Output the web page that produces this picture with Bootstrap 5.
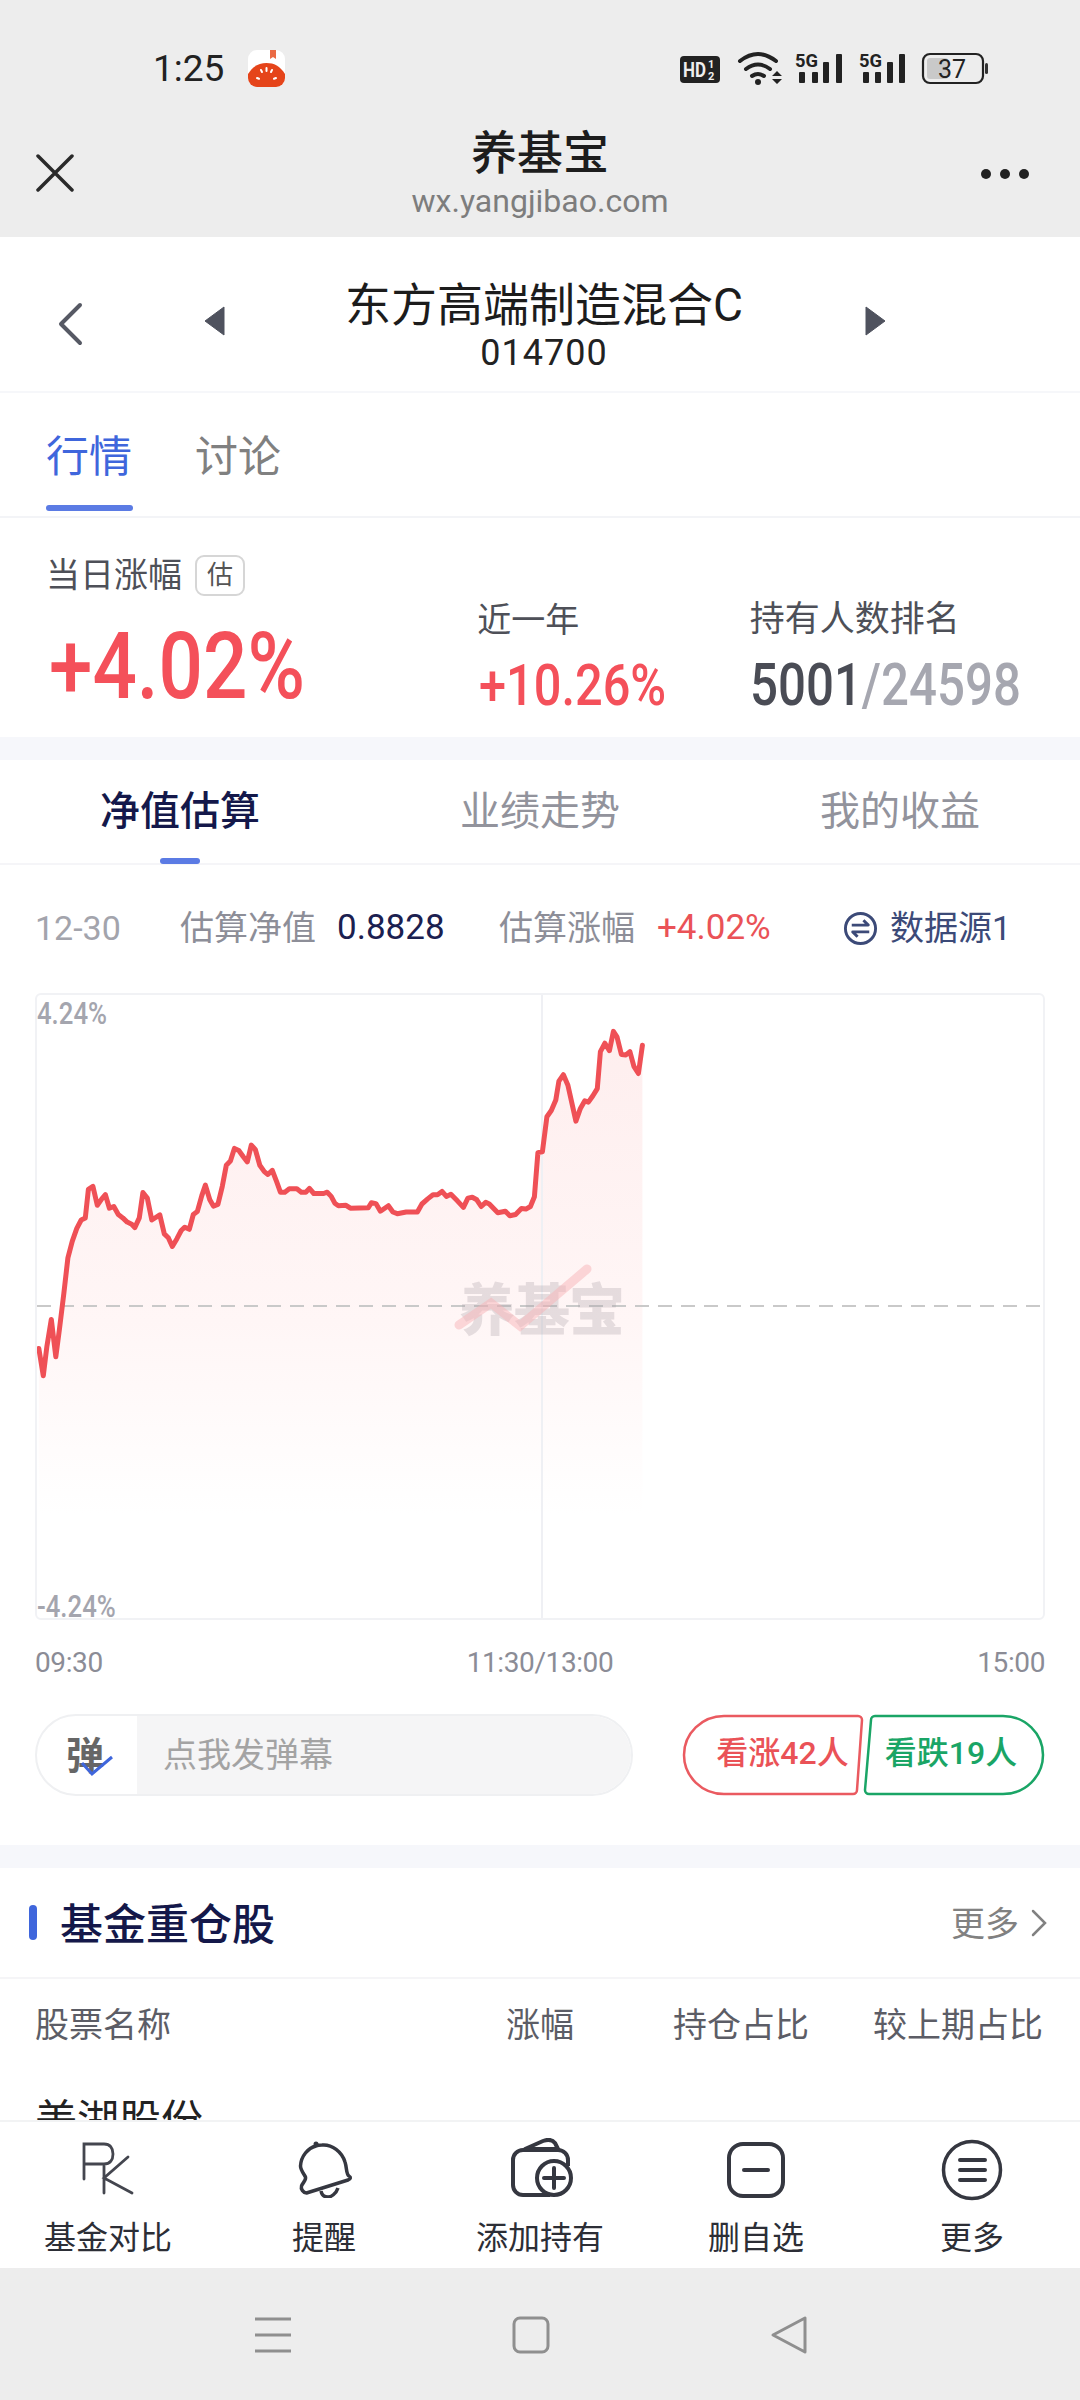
<!DOCTYPE html>
<html lang="zh">
<head>
    <meta charset="UTF-8">
    <meta name="viewport" content="width=device-width, initial-scale=1.0">
    <title>养基宝</title>
    <link href="https://cdn.jsdelivr.net/npm/bootstrap@5.3.3/dist/css/bootstrap.min.css" rel="stylesheet">
    <style>
        :root { --cn: "Noto Sans CJK SC", sans-serif; }
        html, body { margin: 0; background: #fff; }
        body { width: 1080px; height: 2400px; overflow: hidden; font-family: Roboto, "Noto Sans CJK SC", sans-serif; display: flex; flex-direction: column; }
        .top-gray { background: #ededed; height: 237px; flex: none; }
        .status-row { height: 125px; padding: 50px 0 0 153px; }
        .status-time { font-size: 37px; color: #222; line-height: 37px; width: 95px; }
        .status-icons { margin-left: 395px; }
        .browser-row { height: 112px; position: relative; }
        .browser-side { width: 130px; flex: none; margin-bottom: 16px; }
        .side-left { padding-left: 36px; }
        .side-right { padding-right: 50px; }
        .browser-mid { flex: 1; text-align: center; margin-top: -16px; }
        .browser-title { font-size: 46px; font-weight: 500; line-height: 56px; color: #1d1d1d; }
        .browser-url { font-size: 32px; line-height: 41px; color: #7d7d7d; }
        .fund-head { height: 156px; flex: none; border-bottom: 2px solid #f6f7fa; position: relative; padding-left: 8px; }
        .fund-name { font-size: 46px; line-height: 56px; color: #1c1c1c; padding-top: 40px; }
        .fund-code { font-size: 36px; line-height: 41px; color: #222; letter-spacing: 1px; }
        .fund-back { position: absolute; left: 56px; top: 65px; }
        .fund-prev { position: absolute; left: 204px; top: 69px; }
        .fund-next { position: absolute; left: 864px; top: 69px; }
        .main-tabs { height: 125px; flex: none; border-bottom: 2px solid #f3f4f7; padding: 39px 0 0 46px; gap: 63px; }
        .main-tab { font-size: 43px; line-height: 50px; color: #808080; position: relative; height: 79px; }
        .main-tab.on { color: #3f66dc; }
        .main-tab.on::after { content: ""; position: absolute; left: 0; right: -1px; bottom: 0; height: 6px; border-radius: 3px; background: #5b7be4; }
        .stat-block { height: 219px; flex: none; }
        .stat-a { width: 432px; padding: 35px 0 0 46px; }
        .stat-b { width: 319px; padding: 80px 0 0 46px; }
        .stat-c { padding: 80px 0 0 0; }
        .stat-label { font-size: 34px; line-height: 44px; color: #4e5058; }
        .stat-c .stat-label { font-size: 35px; }
        .est-tag { display: inline-block; font-size: 26px; line-height: 36px; width: 50px; height: 41px; text-align: center; border: 2px solid #d6d6d6; border-radius: 9px; color: #555; margin-left: 13px; vertical-align: 3px; }
        .big-up, .mid-up, .mid-rank { font-weight: 500; transform-origin: left center; white-space: nowrap; }
        .big-up { font-size: 92px; line-height: 86px; color: #f4505a; margin: 27px 0 0 3px; transform: scaleX(.85); }
        .mid-up { font-size: 58px; line-height: 60px; color: #f4505a; margin: 13px 0 0 2px; transform: scaleX(.84); }
        .mid-rank { font-size: 60px; line-height: 60px; color: #4a4c55; margin-top: 13px; transform: scaleX(.82); }
        .mid-rank span { color: #a6a7b0; }
        .band { height: 23px; background: #f6f7fb; flex: none; }
        .sub-tabs { height: 105px; flex: none; border-bottom: 2px solid #f5f5f8; }
        .sub-tab { font-size: 40px; line-height: 50px; color: #92939c; position: relative; padding-top: 27px; height: 103px; text-align: center; }
        .sub-tab.on { color: #14184a; font-weight: 500; }
        .sub-tab.on::after { content: ""; position: absolute; left: 50%; margin-left: -20px; bottom: -1px; width: 40px; height: 6px; border-radius: 3px; background: #5b7be4; }
        .est-row { height: 126px; flex: none; padding: 0 35px; font-size: 34px; color: #8d8e98; margin-bottom: 2px; }
        .est-date { width: 145px; color: #a3a4ac; }
        .est-val { color: #1b2050; font-size: 35px; margin-left: 21px; width: 162px; }
        .est-pct { color: #ea5257; font-size: 35px; margin-left: 22px; width: 186px; }
        .src-txt { color: #3c4a78; }
        .src-ico { margin-right: 12px; }
        .chart-wrap { margin: 0 35px; height: 627px; flex: none; position: relative; border: 2px solid #f1f2f5; border-radius: 6px; overflow: hidden; }
        .chart-wrap svg { display: block; }
        .axis-top, .axis-bot { position: absolute; left: 0; font-size: 31px; line-height: 30px; font-weight: 500; color: #a4a5ae; transform: scaleX(.83); transform-origin: left center; }
        .axis-top { top: 4px; }
        .axis-bot { bottom: -1px; line-height: 24px; }
        .watermark { font-family: var(--cn); font-weight: 900; font-size: 56px; fill: #a8a0a4; fill-opacity: .3; }
        .time-axis { height: 92px; flex: none; padding: 0 35px 6px; font-size: 28px; color: #8b8c96; letter-spacing: -.4px; }
        .danmu-row { height: 133px; flex: none; padding: 2px 35px 0; }
        .danmu-box { width: 598px; height: 82px; border: 2px solid #eff0f2; border-radius: 41px; overflow: hidden; }
        .danmu-ico { width: 100px; flex: none; position: relative; font-size: 38px; font-weight: 700; color: #666; font-family: var(--cn); padding-left: 29px; line-height: 74px; }
        .danmu-ico svg { position: absolute; left: 43px; top: 38px; }
        .danmu-in { flex: 1; background: #f5f5f6; color: #a3a3a3; font-size: 34px; padding-left: 26px; line-height: 78px; }
        .vote-wrap { margin-left: 49px; width: 363px; height: 82px; }
        .vote-wrap svg { position: absolute; left: 0; top: 0; }
        .vote-up, .vote-down { position: relative; font-size: 32px; font-weight: 500; line-height: 78px; height: 82px; text-align: center; }
        .vote-up { color: #ea5257; width: 181px; padding-left: 20px; }
        .vote-down { color: #1aa566; width: 182px; padding-right: 6px; }
        .sec-head { height: 111px; flex: none; border-bottom: 2px solid #f5f5f7; padding: 0 33px 0 29px; }
        .sec-bar { width: 8px; height: 35px; border-radius: 4px; background: #3f66dc; margin-right: 23px; }
        .sec-title { font-size: 43px; font-weight: 500; color: #14184a; padding-top: 5px; }
        .sec-more { font-size: 34px; color: #818181; margin-left: auto; margin-right: 12px; padding-top: 3px; }
        .stock-table { flex: 1; overflow: hidden; padding: 0 35px; min-height: 0; }
        .stock-head { height: 88px; font-size: 34px; color: #5c5d66; padding-top: 4px; }
        .stock-c1 { width: 471px; }
        .stock-c2 { width: 167px; }
        .stock-c3 { width: 200px; }
        .stock-name { font-size: 42px; color: #222; line-height: 44px; padding-top: 32px; }
        .action-bar { height: 148px; flex: none; border-top: 2px solid #f2f3f4; background: #fff; }
        .action-item { width: 216px; text-align: center; padding-top: 16px; }
        .action-ico { height: 78px; }
        .action-txt { font-size: 32px; line-height: 44px; color: #2c2e36; }
        .sys-nav { height: 132px; flex: none; background: #ededed; }
    </style>
</head>
<body>
    <div class="top-gray">
        <div class="status-row d-flex">
            <div class="status-time">1:25</div>
            <svg width="37" height="37" viewBox="0 0 37 37">
                <defs><clipPath id="appClip"><rect width="37" height="37" rx="9"/></clipPath></defs>
                <g clip-path="url(#appClip)">
                    <rect width="37" height="37" fill="#fff"/>
                    <path d="M22 0h6v9l-3-2-3 2z" fill="#ea6a44"/>
                    <path d="M0 37V24C5 16 11 13 18.500 13S32 16 37 24v13z" fill="#e5441a"/>
                </g>
                <g stroke="#fff" stroke-width="2" stroke-linecap="round"><path d="M9 28l2 .8M28 28l-2 .8M13 20l1 2M24 20l-1 2M18.500 18v3"/></g>
            </svg>
            <svg class="status-icons" width="310" height="36" viewBox="0 0 310 36">
                <rect x="0" y="6" width="40" height="27" rx="4" fill="#222"/>
                <text x="3" y="27" font-size="20" font-weight="700" fill="#eee" font-family="Roboto, sans-serif" textLength="23" lengthAdjust="spacingAndGlyphs">HD</text>
                <text x="28" y="18" font-size="11" font-weight="700" fill="#eee" font-family="Roboto, sans-serif">1</text>
                <text x="28" y="30" font-size="11" font-weight="700" fill="#eee" font-family="Roboto, sans-serif">2</text>
                <g fill="none" stroke="#222" stroke-width="4" stroke-linecap="round">
                    <path d="M60 11q18-14 36 0"/>
                    <path d="M66 19q12-9 24 0"/>
                    <path d="M72 26q6-4 12 0"/>
                </g>
                <circle cx="78" cy="32" r="3" fill="#222"/>
                <path d="M92 26h10l-5-5zM92 29h10l-5 5z" fill="#222"/>
                <text x="115" y="17" font-size="18" font-weight="700" fill="#222" font-family="Roboto, sans-serif" textLength="23" lengthAdjust="spacingAndGlyphs">5G</text>
                <g fill="#222"><rect x="119" y="22" width="6" height="11" rx="1"/><rect x="132" y="22" width="6" height="11" rx="1"/><rect x="143" y="12" width="6" height="21" rx="1"/><rect x="156" y="4" width="6" height="29" rx="1"/></g>
                <text x="179" y="17" font-size="18" font-weight="700" fill="#222" font-family="Roboto, sans-serif" textLength="23" lengthAdjust="spacingAndGlyphs">5G</text>
                <g fill="#222"><rect x="183" y="22" width="6" height="11" rx="1"/><rect x="195" y="22" width="6" height="11" rx="1"/><rect x="207" y="12" width="6" height="21" rx="1"/><rect x="219" y="4" width="6" height="29" rx="1"/></g>
                <rect x="243" y="4" width="60" height="29" rx="7" fill="none" stroke="#222" stroke-width="2.200"/>
                <rect x="247" y="8" width="21" height="21" rx="3" fill="#c9c9c9"/>
                <rect x="305" y="13" width="3" height="11" rx="1.500" fill="#333"/>
                <text x="258" y="28" font-size="25" fill="#222" font-family="Roboto, sans-serif">37</text>
            </svg>
        </div>
        <div class="browser-row d-flex align-items-center">
            <div class="browser-side side-left">
                <svg class="d-block" width="38" height="38" viewBox="0 0 38 38"><path d="M2 2 36 36M36 2 2 36" stroke="#2a2a2a" stroke-width="3.500" stroke-linecap="round"/></svg>
            </div>
            <div class="browser-mid">
                <div class="browser-title">养基宝</div>
                <div class="browser-url">wx.yangjibao.com</div>
            </div>
            <div class="browser-side side-right text-end">
                <svg width="50" height="12" viewBox="0 0 50 12"><circle cx="6" cy="6" r="5" fill="#222"/><circle cx="25" cy="6" r="5" fill="#222"/><circle cx="44" cy="6" r="5" fill="#222"/></svg>
            </div>
        </div>
    </div>

    <div class="fund-head text-center">
        <svg class="fund-back" width="28" height="44" viewBox="0 0 28 44"><path d="M24 3 5 22l19 19" fill="none" stroke="#565964" stroke-width="4" stroke-linecap="round" stroke-linejoin="round"/></svg>
        <svg class="fund-prev" width="22" height="30" viewBox="0 0 22 30"><path d="M20 1v28L1 15z" fill="#4f525e" stroke="#4f525e" stroke-linejoin="round"/></svg>
        <div class="fund-name">东方高端制造混合C</div>
        <div class="fund-code">014700</div>
        <svg class="fund-next" width="22" height="30" viewBox="0 0 22 30"><path d="M2 1v28l19-14z" fill="#4f525e" stroke="#4f525e" stroke-linejoin="round"/></svg>
    </div>

    <div class="main-tabs d-flex">
        <div class="main-tab on">行情</div>
        <div class="main-tab">讨论</div>
    </div>

    <div class="stat-block d-flex">
        <div class="stat-a">
            <div class="stat-label">当日涨幅<span class="est-tag">估</span></div>
            <div class="big-up">+4.02%</div>
        </div>
        <div class="stat-b">
            <div class="stat-label">近一年</div>
            <div class="mid-up">+10.26%</div>
        </div>
        <div class="stat-c">
            <div class="stat-label">持有人数排名</div>
            <div class="mid-rank">5001<span>/24598</span></div>
        </div>
    </div>
    <div class="band"></div>

    <div class="sub-tabs row g-0">
        <div class="col-4 sub-tab on">净值估算</div>
        <div class="col-4 sub-tab">业绩走势</div>
        <div class="col-4 sub-tab">我的收益</div>
    </div>

    <div class="est-row d-flex align-items-center">
        <span class="est-date">12-30</span>
        <span>估算净值</span><span class="est-val">0.8828</span>
        <span>估算涨幅</span><span class="est-pct">+4.02%</span>
        <span class="d-flex align-items-center">
            <svg class="src-ico" width="35" height="35" viewBox="0 0 36 36"><circle cx="18" cy="18" r="15.500" fill="none" stroke="#3c4a78" stroke-width="3"/><path d="M9 14.500h17l-5-5M27 21.500H10l5 5" fill="none" stroke="#3c4a78" stroke-width="3" stroke-linejoin="round"/></svg>
            <span class="src-txt">数据源1</span>
        </span>
    </div>

    <div class="chart-wrap">
        <svg id="chart" width="1006" height="623" viewBox="0 0 1006 623">
            <defs>
                <linearGradient id="areaFill" x1="0" y1="0" x2="0" y2="1">
                    <stop offset="0" stop-color="#feeeee"/>
                    <stop offset=".6" stop-color="#fff6f6"/>
                    <stop offset="1" stop-color="#ffffff"/>
                </linearGradient>
            </defs>
            <path id="area" fill="url(#areaFill)"/>
            <line x1="505" y1="0" x2="505" y2="623" stroke="#eff0f4" stroke-width="2"/>
            <line x1="0" y1="311" x2="1006" y2="311" stroke="#c9c9c9" stroke-width="2" stroke-dasharray="14 9"/>
            <text class="watermark" x="505" y="335" text-anchor="middle" textLength="166">养基宝</text>
            <path d="M422 330 454 308 483 331 550 274" fill="none" stroke="#f7b4b8" stroke-opacity=".5" stroke-width="9" stroke-linecap="round"/>
            <polyline id="line" fill="none" stroke="#ef5056" stroke-width="5" stroke-linejoin="round" stroke-linecap="round"/>
        </svg>
        <div class="axis-top">4.24%</div>
        <div class="axis-bot">-4.24%</div>
    </div>

    <div class="time-axis d-flex justify-content-between align-items-center">
        <span>09:30</span><span>11:30/13:00</span><span>15:00</span>
    </div>

    <div class="danmu-row d-flex">
        <div class="danmu-box d-flex">
            <div class="danmu-ico">弹<svg width="34" height="24" viewBox="0 0 34 24"><path d="M2 9l10 11L32 3" fill="none" stroke="#3f66dc" stroke-width="3"/></svg></div>
            <div class="danmu-in">点我发弹幕</div>
        </div>
        <div class="vote-wrap d-flex position-relative">
            <svg width="363" height="82" viewBox="0 0 363 82">
                <path d="M42 2H176a4 4 0 0 1 4 4l-5 70a4 4 0 0 1-4 4H42a40 39 0 0 1 0-78z" fill="none" stroke="#ea5a60" stroke-width="2.500"/>
                <path d="M193 2h128a40 39 0 0 1 0 78H187a4 4 0 0 1-4-4l6-70a4 4 0 0 1 4-4z" fill="none" stroke="#1aa566" stroke-width="2.500"/>
            </svg>
            <div class="vote-up">看涨42人</div>
            <div class="vote-down">看跌19人</div>
        </div>
    </div>

    <div class="band"></div>

    <div class="sec-head d-flex align-items-center">
        <div class="sec-bar"></div>
        <div class="sec-title">基金重仓股</div>
        <div class="sec-more">更多</div>
        <svg width="16" height="28" viewBox="0 0 16 28"><path d="M2 2l12 12L2 26" fill="none" stroke="#818181" stroke-width="2.500" stroke-linecap="round"/></svg>
    </div>

    <div class="stock-table">
        <div class="stock-head d-flex align-items-center">
            <span class="stock-c1">股票名称</span><span class="stock-c2">涨幅</span><span class="stock-c3">持仓占比</span><span>较上期占比</span>
        </div>
        <div class="stock-name">美湖股份</div>
    </div>

    <div class="action-bar d-flex">
        <div class="action-item">
            <div class="action-ico"><svg width="64" height="60" viewBox="0 0 64 60"><path d="M8 41V6h20c6 0 9 4 9 10s-3 10-9 10H8M28 28v27M52 19 28 40l28 15" fill="none" stroke="#44464f" stroke-width="2.800" stroke-linecap="round"/></svg></div>
            <div class="action-txt">基金对比</div>
        </div>
        <div class="action-item">
            <div class="action-ico"><svg width="60" height="60" viewBox="0 0 60 60"><path d="M22 8C14 10 7 18 6.500 28c0 4 4 9 5 11 1 3-3 6-4 9-1 3 2 7 5 7L54 42c3-1 3-3 1-4-3-2-2-8-4-14C48 14 38 6 28 7c-2 0-4 0-6 1z" fill="none" stroke="#353740" stroke-width="3.500" stroke-linejoin="round"/><path d="M27 53c1 5 4 6 7 6s8-3 10-9" fill="none" stroke="#353740" stroke-width="3.500"/><circle cx="22" cy="6" r="2.500" fill="#353740"/></svg></div>
            <div class="action-txt">提醒</div>
        </div>
        <div class="action-item">
            <div class="action-ico"><svg width="70" height="60" viewBox="0 0 70 60"><path d="M45 57H18A10 10 0 0 1 8 47V22a10 10 0 0 1 10-10h35a10 10 0 0 1 10 10v6" fill="none" stroke="#353740" stroke-width="4"/><path d="M20 11 38 3q8-3 12 2l3 6z" fill="none" stroke="#353740" stroke-width="4" stroke-linejoin="round"/><circle cx="49" cy="40" r="17" fill="#fff" stroke="#353740" stroke-width="4"/><path d="M49 30v20M39 40h20" stroke="#353740" stroke-width="4" stroke-linecap="round"/></svg></div>
            <div class="action-txt">添加持有</div>
        </div>
        <div class="action-item">
            <div class="action-ico"><svg width="60" height="62" viewBox="0 0 60 62"><rect x="3" y="6" width="54" height="52" rx="14" fill="none" stroke="#353740" stroke-width="4"/><path d="M18 32h24" stroke="#353740" stroke-width="4" stroke-linecap="round"/></svg></div>
            <div class="action-txt">删自选</div>
        </div>
        <div class="action-item">
            <div class="action-ico"><svg width="64" height="64" viewBox="0 0 64 64"><circle cx="32" cy="32" r="28.500" fill="none" stroke="#353740" stroke-width="3.500"/><path d="M20 22h25M20 32h25M20 42h25" stroke="#353740" stroke-width="4" stroke-linecap="round"/></svg></div>
            <div class="action-txt">更多</div>
        </div>
    </div>

    <div class="sys-nav">
        <svg class="d-block" width="1080" height="132" viewBox="0 0 1080 132">
            <path d="M255 51h36M255 67h36M255 83h36" stroke="#8f8f8f" stroke-width="3"/>
            <rect x="514" y="50" width="34" height="34" rx="6" fill="none" stroke="#8f8f8f" stroke-width="3"/>
            <path d="M805 50v34L773 67z" fill="none" stroke="#8f8f8f" stroke-width="3" stroke-linejoin="round"/>
        </svg>
    </div>

    <script src="https://cdn.jsdelivr.net/npm/bootstrap@5.3.3/dist/js/bootstrap.bundle.min.js"></script>
    <script>
        // intraday curve, values read off the chart
        const raw = [[87,875],[97,940],[105,870],[115,806],[125,895],[133,830],[143,745],[152,660],[162,620],[172,590],[182,570],[191,565],[198,497],[208,490],[218,535],[228,520],[236,510],[245,542],[255,538],[265,557],[275,565],[285,575],[295,580],[302,588],[312,565],[320,505],[330,518],[340,570],[358,558],[368,603],[377,612],[386,633],[396,615],[406,595],[414,587],[424,592],[433,557],[442,550],[452,512],[460,487],[470,522],[478,537],[488,533],[498,490],[507,440],[516,430],[525,400],[535,405],[545,420],[554,432],[563,392],[572,403],[582,440],[592,455],[600,462],[610,452],[620,480],[628,504],[638,504],[648,496],[665,496],[675,504],[685,504],[693,495],[703,507],[725,507],[733,504],[742,514],[750,530],[758,536],[775,535],[785,542],[825,541],[832,529],[842,531],[852,549],[870,536],[880,551],[890,555],[910,551],[935,551],[945,532],[958,520],[970,510],[980,510],[990,502],[1000,514],[1010,509],[1025,525],[1038,540],[1048,518],[1058,516],[1068,522],[1078,538],[1088,528],[1096,532],[1115,553],[1132,549],[1142,560],[1155,557],[1168,543],[1178,544],[1188,538],[1197,515],[1205,410],[1215,408],[1225,325],[1235,310],[1245,285],[1252,240],[1262,225],[1272,250],[1290,335],[1300,305],[1310,287],[1318,290],[1328,275],[1338,258],[1345,170],[1355,150],[1365,168],[1374,122],[1382,135],[1392,177],[1402,178],[1411,170],[1420,205],[1430,222],[1439,155]];
        const pts = raw.map(p => [(p[0] / 2.24 - 37).toFixed(1), (p[1] / 2.375 - 15).toFixed(1)].join(','));
        document.getElementById('line').setAttribute('points', pts.join(' '));
        const first = pts[0].split(',')[0], last = pts[pts.length - 1].split(',')[0];
        document.getElementById('area').setAttribute('d', `M${first},520 L${pts.join(' L')} L${last},520 Z`);
    </script>
</body>
</html>
